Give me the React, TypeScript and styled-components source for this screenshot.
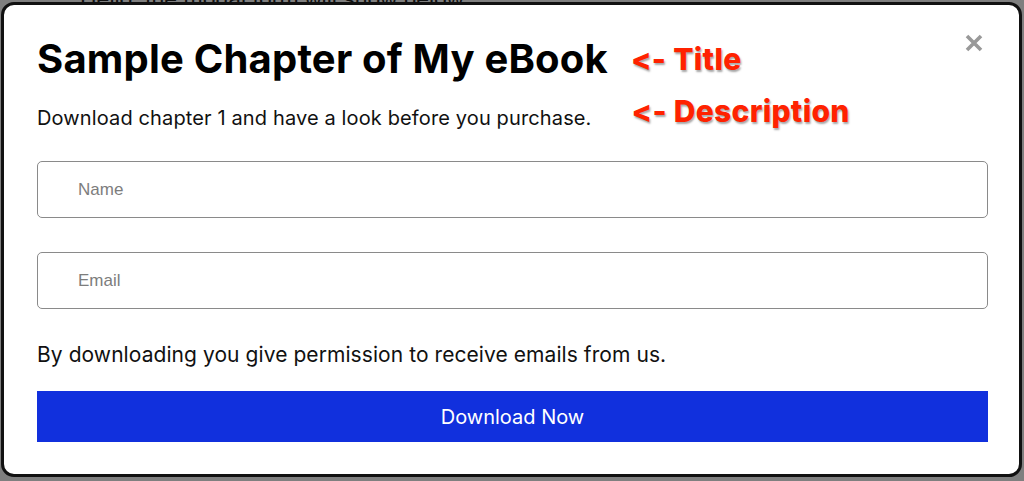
import styled, { createGlobalStyle } from "styled-components";

const GlobalStyle = createGlobalStyle`
  html, body {
    margin: 0;
    padding: 0;
    background: #7f7f7f;
    font-family: Inter, "Noto Sans", sans-serif;
    font-feature-settings: "calt" 0, "liga" 0;
    overflow: hidden;
  }
`;

const Page = styled.div`
  position: relative;
  width: 1024px;
  height: 481px;
`;

const BackText = styled.p`
  margin: 0;
  padding: 0 0 0 80px;
  font-family: "Liberation Sans", Arial, sans-serif;
  font-size: 23px;
  line-height: 1;
  color: #111;
  transform: translateY(-12px);
`;

const Modal = styled.div`
  position: absolute;
  left: 1px;
  top: 2px;
  width: 1021px;
  height: 475px;
  box-sizing: border-box;
  background: #fff;
  border: 3px solid #111;
  border-radius: 13px;
  padding: 26px 31px 0 33px;
  display: flex;
  flex-direction: column;
`;

const CloseButton = styled.button`
  position: absolute;
  top: 23px;
  right: 30px;
  width: 30px;
  height: 30px;
  padding: 0;
  border: none;
  background: none;
  display: flex;
  align-items: center;
  justify-content: center;
  cursor: pointer;
`;

const Heading = styled.div<{ $gap: number }>`
  display: flex;
  align-items: baseline;
  gap: ${(p) => p.$gap}px;
`;

const Title = styled.h1`
  margin: 0;
  font-size: 40px;
  line-height: 56px;
  font-weight: 700;
  color: #000;
  letter-spacing: 0.2px;
`;

const Note = styled.span`
  position: relative;
  top: -3px;
  font-family: Inter, "Noto Sans", sans-serif;
  font-feature-settings: "calt" 0, "liga" 0;
  font-weight: 800;
  font-size: 30px;
  letter-spacing: 0.3px;
  color: #ff2200;
  text-shadow: 1px 2px 2px rgba(0, 0, 0, 0.35);
`;

const Description = styled.p`
  margin: 17px 0 0;
  font-size: 20px;
  line-height: 28px;
  letter-spacing: 0.13px;
  color: #111;
`;

const Form = styled.form`
  display: flex;
  flex-direction: column;
  gap: 34px;
  margin-top: 29px;
`;

const Input = styled.input`
  box-sizing: border-box;
  width: 100%;
  height: 57px;
  padding: 0 40px;
  border: 1px solid #8a8a8a;
  border-radius: 5px;
  font-family: "Liberation Sans", Arial, sans-serif;
  font-size: 17px;
  color: #222;
  outline: none;
  &::placeholder {
    color: #7d7d7d;
  }
`;

const Consent = styled.p`
  margin: 32px 0 0;
  font-size: 21px;
  line-height: 28px;
  letter-spacing: 0.07px;
  color: #111;
`;

const Submit = styled.button`
  margin-top: 22px;
  height: 51px;
  width: 100%;
  border: none;
  background: #1130dd;
  color: #fff;
  font-family: Inter, "Noto Sans", sans-serif;
  font-size: 20px;
  cursor: pointer;
`;

export default function App() {
  return (
    <>
      <GlobalStyle />
      <Page>
        <BackText>Hello, the modal form will show below</BackText>
        <Modal>
          <CloseButton aria-label="Close">
            <svg width="20" height="20" viewBox="0 0 20 20">
              <path
                d="M3 3 L17 17 M17 3 L3 17"
                stroke="#999"
                strokeWidth="3.6"
                strokeLinecap="butt"
              />
            </svg>
          </CloseButton>
          <Heading $gap={23}>
            <Title>Sample Chapter of My eBook</Title>
            <Note>&lt;- Title</Note>
          </Heading>
          <Heading $gap={40}>
            <Description>
              Download chapter 1 and have a look before you purchase.
            </Description>
            <Note>&lt;- Description</Note>
          </Heading>
          <Form onSubmit={(e) => e.preventDefault()}>
            <Input type="text" placeholder="Name" />
            <Input type="email" placeholder="Email" />
          </Form>
          <Consent>
            By downloading you give permission to receive emails from us.
          </Consent>
          <Submit type="button">Download Now</Submit>
        </Modal>
      </Page>
    </>
  );
}
